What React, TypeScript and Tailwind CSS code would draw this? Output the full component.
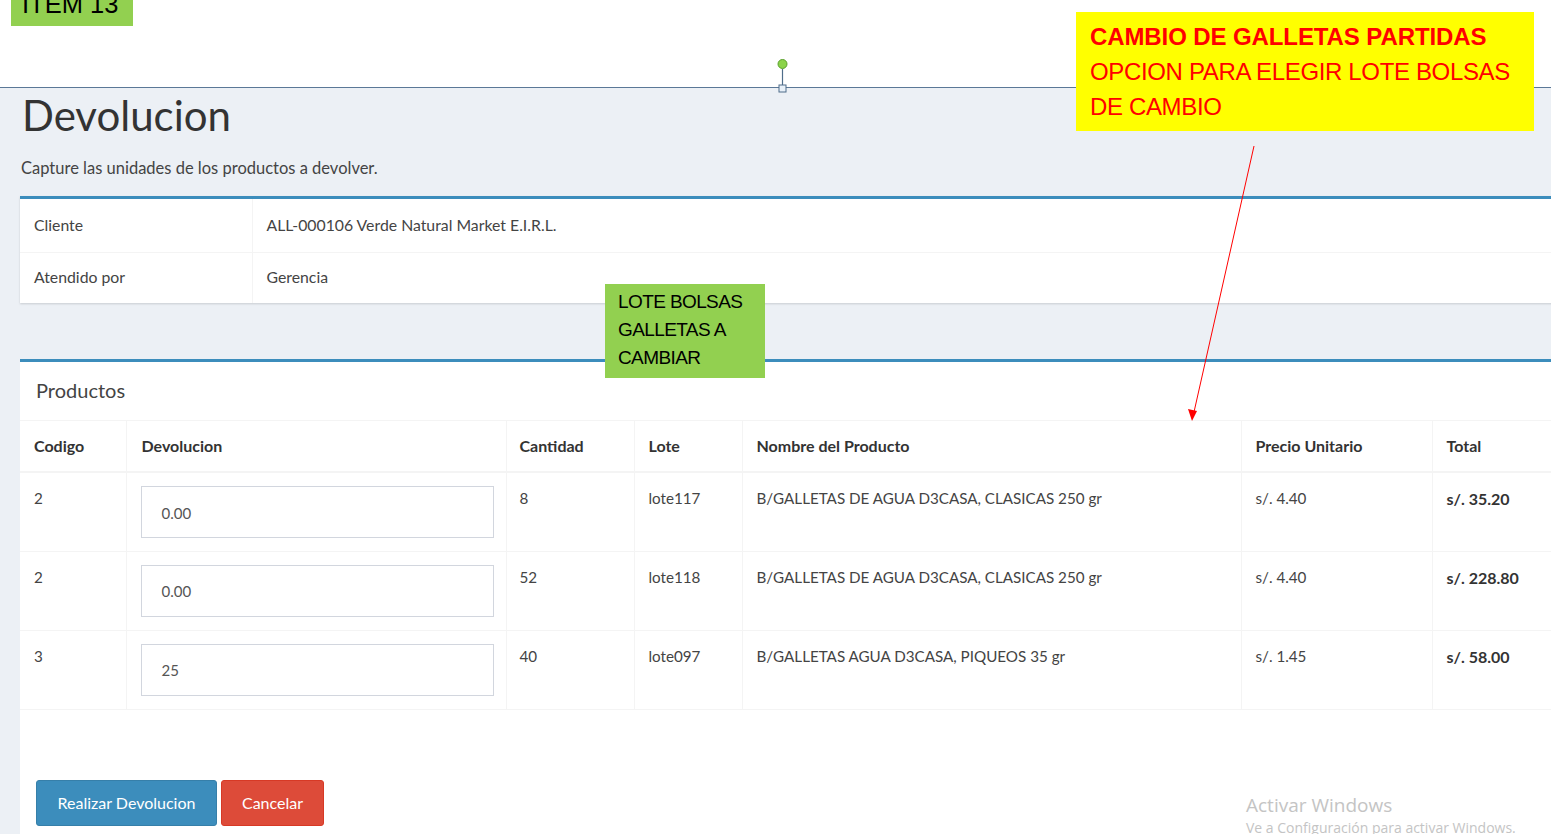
import React from "react"

const rows = [
  { codigo: "2", dev: "0.00", cantidad: "8", lote: "lote117", nombre: "B/GALLETAS DE AGUA D3CASA, CLASICAS 250 gr", precio: "s/. 4.40", total: "s/. 35.20" },
  { codigo: "2", dev: "0.00", cantidad: "52", lote: "lote118", nombre: "B/GALLETAS DE AGUA D3CASA, CLASICAS 250 gr", precio: "s/. 4.40", total: "s/. 228.80" },
  { codigo: "3", dev: "25", cantidad: "40", lote: "lote097", nombre: "B/GALLETAS AGUA D3CASA, PIQUEOS 35 gr", precio: "s/. 1.45", total: "s/. 58.00" },
]

export default function App() {
  return (
    <div className="relative w-[1551px] h-[834px] overflow-hidden bg-white font-['Lato',sans-serif] text-[#333]">
      {/* slide header area */}
      <div className="h-[88px] border-b border-[#5b7897] bg-white" />

      {/* page content */}
      <div className="h-[746px] bg-[#ecf0f5] pl-[20px]">
        <h1 className="pl-[2px] pt-[4px] text-[42px] leading-[46px] text-[#333]">Devolucion</h1>
        <p className="mt-[20px] pl-[1px] text-[16.5px] leading-[20px] text-[#444]">Capture las unidades de los productos a devolver.</p>

        <div className="mt-[18px] w-[1600px] border-t-[3px] border-[#3c8dbc] bg-white shadow-[0_1px_2px_rgba(0,0,0,0.15)]">
          <table className="w-full border-collapse text-[15.8px] text-[#444]">
            <tbody>
              <tr className="h-[53px]">
                <td className="w-[232px] border-r border-[#f4f4f4] pl-[14px]">Cliente</td>
                <td className="pl-[14px]">ALL-000106 Verde Natural Market E.I.R.L.</td>
              </tr>
              <tr className="h-[51px] border-t border-[#f4f4f4]">
                <td className="border-r border-[#f4f4f4] pl-[14px] pb-[1px]">Atendido por</td>
                <td className="pl-[14px] pb-[1px]">Gerencia</td>
              </tr>
            </tbody>
          </table>
        </div>

        <div className="mt-[56px] w-[1600px] h-[480px] border-t-[3px] border-[#3c8dbc] bg-white">
          <div className="h-[59px] flex items-center pl-[16px] pb-[3px] text-[20px] text-[#444] border-b border-[#f4f4f4]">Productos</div>
          <table className="border-collapse text-[15.2px] text-[#444]">
            <thead>
              <tr className="h-[51px] text-[16px] font-bold text-[#333]">
                <th className="w-[106px] pl-[14px] text-left border-r border-b-2 border-[#f4f4f4]">Codigo</th>
                <th className="w-[380px] pl-[15px] text-left border-r border-b-2 border-[#f4f4f4]">Devolucion</th>
                <th className="w-[128px] pl-[13px] text-left border-r border-b-2 border-[#f4f4f4]">Cantidad</th>
                <th className="w-[108px] pl-[14px] text-left border-r border-b-2 border-[#f4f4f4]">Lote</th>
                <th className="w-[499px] pl-[14px] text-left border-r border-b-2 border-[#f4f4f4]">Nombre del Producto</th>
                <th className="w-[191px] pl-[14px] text-left border-r border-b-2 border-[#f4f4f4]">Precio Unitario</th>
                <th className="w-[160px] pl-[14px] text-left border-b-2 border-[#f4f4f4]">Total</th>
              </tr>
            </thead>
            <tbody>
              {rows.map((r, i) => (
                <tr key={i} className="h-[79px] align-top border-b border-[#f4f4f4]">
                  <td className="pl-[14px] pt-[14px] border-r border-[#f4f4f4]">{r.codigo}</td>
                  <td className="pl-[14px] pt-[13px] border-r border-[#f4f4f4]">
                    <div className="w-[353px] h-[52px] border border-[#d2d6de] flex items-center pl-[20px] pt-[2px] text-[#555] text-[15px]">{r.dev}</div>
                  </td>
                  <td className="pl-[13px] pt-[14px] border-r border-[#f4f4f4]">{r.cantidad}</td>
                  <td className="pl-[14px] pt-[14px] border-r border-[#f4f4f4]">{r.lote}</td>
                  <td className="pl-[14px] pt-[14px] border-r border-[#f4f4f4]">{r.nombre}</td>
                  <td className="pl-[14px] pt-[14px] border-r border-[#f4f4f4]">{r.precio}</td>
                  <td className="pl-[14px] pt-[14px] text-[16px] font-bold text-[#333]">{r.total}</td>
                </tr>
              ))}
            </tbody>
          </table>
          <div className="mt-[70px] ml-[16px] flex gap-[4px]">
            <button className="w-[181px] h-[46px] rounded-[3px] bg-[#3c8dbc] border border-[#367fa9] text-white text-[16px]">Realizar Devolucion</button>
            <button className="w-[103px] h-[46px] rounded-[3px] bg-[#dd4b39] border border-[#d73925] text-white text-[16px]">Cancelar</button>
          </div>
        </div>
      </div>

      {/* slide annotations */}
      <div className="absolute left-[11px] top-[-14px] w-[122px] h-[40px] bg-[#92d050] pl-[11px] pt-[1px] font-['Liberation_Sans',sans-serif] text-[25.5px] leading-[34px] text-black">ITEM 13</div>

      <div className="absolute left-[1076px] top-[12px] w-[458px] h-[119px] bg-[#ffff00] pl-[14px] pt-[7px] font-['Liberation_Sans',sans-serif] text-[24px] leading-[35px] text-[#ff0000]">
        <div className="font-bold tracking-[-0.1px]">CAMBIO DE GALLETAS PARTIDAS</div>
        <div className="tracking-[-0.35px]">OPCION PARA ELEGIR LOTE BOLSAS</div>
        <div className="tracking-[-0.35px]">DE CAMBIO</div>
      </div>

      <div className="absolute left-[605px] top-[284px] w-[160px] h-[94px] bg-[#92d050] pl-[13px] pt-[4px] font-['Liberation_Sans',sans-serif] text-[19px] leading-[28px] tracking-[-0.6px] text-black">
        <div>LOTE BOLSAS</div>
        <div>GALLETAS A</div>
        <div>CAMBIAR</div>
      </div>

      <svg className="absolute left-0 top-0" width="1551" height="834">
        <line x1="1254" y1="146" x2="1194" y2="412" stroke="#ff0000" strokeWidth="1" />
        <polygon points="1192,421 1188,409 1197,411" fill="#ff0000" />
        <line x1="782.5" y1="69" x2="782.5" y2="85" stroke="#4f6d8a" strokeWidth="1.2" />
        <circle cx="782.5" cy="64" r="4.5" fill="#8bd34a" stroke="#5aa02c" strokeWidth="1" />
        <rect x="779" y="85" width="7" height="7" fill="#e8f0f8" stroke="#4f6d8a" strokeWidth="1" />
      </svg>

      <div className="absolute left-[1246px] top-[792px] font-['Open_Sans',sans-serif] text-[#c4c4c4]">
        <div className="text-[19px] leading-[26px]">Activar Windows</div>
        <div className="text-[14px] leading-[20px]">Ve a Configuración para activar Windows.</div>
      </div>
    </div>
  )
}
